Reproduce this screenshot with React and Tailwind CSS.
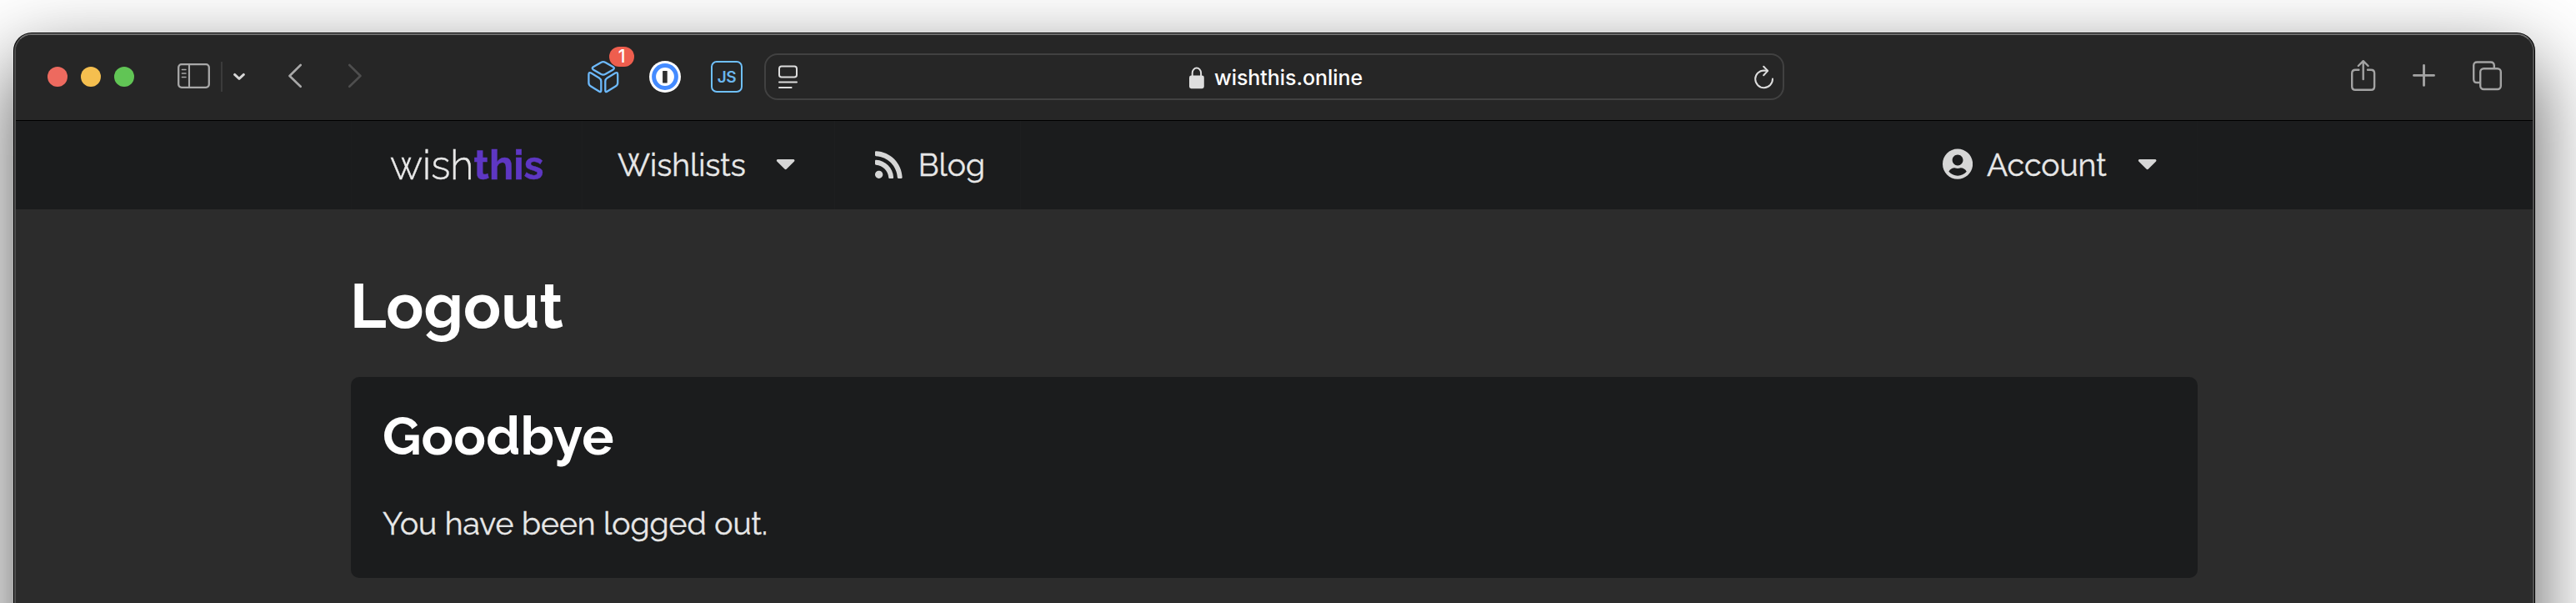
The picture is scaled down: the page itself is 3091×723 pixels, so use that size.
import { FaCaretDown, FaRss, FaUserCircle } from "react-icons/fa";

function SidebarIcon() {
  return (
    <svg className="ml-[52px] h-14 w-[39px] shrink-0" viewBox="0 0 39 56" fill="none" stroke="#a8a8a8">
      <rect x="1.2" y="13.2" width="36.6" height="27.6" rx="3.6" strokeWidth="2.3" />
      <path d="M14 13v28" strokeWidth="2.1" />
      <path d="M5.4 19.4h4.6M5.4 24h4.6M5.4 28.4h4.6" strokeWidth="1.5" strokeLinecap="round" />
    </svg>
  );
}

function CubeExtension() {
  return (
    <div className="relative ml-[271px] h-14 w-[38px] shrink-0">
      <svg className="h-14 w-[38px]" viewBox="0 0 38 56" fill="none" stroke="#6db9fb" strokeWidth="2.3" strokeLinejoin="round">
        <path d="M16 10.9Q18.8 9.4 21.6 10.9L30.8 16.2Q33 17.8 30.8 19.4L21.6 24.8Q18.8 26.3 16 24.8L6.8 19.4Q4.6 17.8 6.8 16.2Z" />
        <path d="M1.4 25.4Q1.4 22 4.2 23.6L14 29.4Q16.3 30.8 16.3 33.6V44.6Q16.3 47 14.2 45.7L4 39.5Q1.4 38 1.4 35.2Z" />
        <path d="M36.2 25.4Q36.2 22 33.4 23.6L23.6 29.4Q21.3 30.8 21.3 33.6V44.6Q21.3 47 23.4 45.7L33.6 39.5Q36.2 38 36.2 35.2Z" />
      </svg>
      <span className="absolute top-[-8px] left-[26px] flex h-6 w-[30px] items-center justify-center rounded-full bg-[#ee5e4e] font-['Inter',sans-serif] text-[21px] leading-6 font-medium text-white">
        1
      </span>
    </div>
  );
}

function PasswordExtension() {
  return (
    <svg className="ml-9 h-14 w-[38px] shrink-0" viewBox="0 0 38 56">
      <circle cx="19" cy="28" r="19" fill="#fff" />
      <circle cx="19" cy="28" r="13.4" fill="none" stroke="#448bff" strokeWidth="5" />
      <rect x="16.1" y="21" width="5.6" height="14.6" rx="0.6" fill="#2f2f2f" />
    </svg>
  );
}

function AddressBar() {
  return (
    <div className="ml-[26px] flex h-14 w-[1224px] shrink-0 items-center rounded-[16px] border-2 border-[#414141]">
      <svg className="ml-[15px] h-14 w-6 shrink-0" viewBox="0 0 24 56" fill="none" stroke="#dcdcdc" strokeWidth="2" strokeLinecap="round">
        <rect x="1" y="15.6" width="21" height="13" rx="2.8" />
        <path d="M1 34.4h21M1 41h14.6" />
      </svg>
      <svg className="ml-[469px] h-14 w-[18px] shrink-0" viewBox="0 0 18 56">
        <rect x="0" y="26.6" width="17.8" height="15.6" rx="2.4" fill="#dedede" />
        <path d="M3.7 28v-4.6a5.2 5.8 0 0 1 10.4 0V28" fill="none" stroke="#dedede" strokeWidth="2" />
      </svg>
      <span className="ml-[12px] pt-[2px] font-['Inter',sans-serif] text-[25px] leading-[30px] font-medium tracking-[-0.06px] whitespace-nowrap text-white">
        wishthis.online
      </span>
      <svg className="mr-[10px] ml-auto h-14 w-[25px] shrink-0" viewBox="0 0 25 56" fill="none" stroke="#dcdcdc" strokeWidth="2" strokeLinecap="round" strokeLinejoin="round">
        <path d="M23 30.6A10.4 10.4 0 1 1 12.6 20.4L17 20.8" />
        <path d="M12.2 15.8l5 5.1-5 5.3" />
      </svg>
    </div>
  );
}

function Toolbar() {
  return (
    <div className="flex h-[103px] items-start border-b border-black bg-[#262626] pt-[22px] pl-[38px]">
      <div className="flex h-14 items-center gap-4">
        <span className="size-6 rounded-full bg-[#ed6a5f]" />
        <span className="size-6 rounded-full bg-[#f5bf4f]" />
        <span className="size-6 rounded-full bg-[#61c555]" />
      </div>
      <SidebarIcon />
      <span className="mt-[10px] ml-[13px] h-9 w-0.5 bg-[#3b3b3b]" />
      <svg className="ml-[13px] h-14 w-[14px] shrink-0" viewBox="0 0 14 56" fill="none" stroke="#d6d6d6" strokeWidth="2.9" strokeLinecap="round" strokeLinejoin="round">
        <path d="M1.6 25.4L7 30.4l5.4-5" />
      </svg>
      <svg className="ml-[52px] h-14 w-4 shrink-0" viewBox="0 0 16 56" fill="none" stroke="#a8a8a8" strokeWidth="2.6" strokeLinecap="round" strokeLinejoin="round">
        <path d="M14.7 14L1.5 27l13.2 12.8" />
      </svg>
      <svg className="ml-14 h-14 w-4 shrink-0" viewBox="0 0 16 56" fill="none" stroke="#4e4e4e" strokeWidth="2.6" strokeLinecap="round" strokeLinejoin="round">
        <path d="M1.3 14l13.2 13L1.3 39.8" />
      </svg>
      <CubeExtension />
      <PasswordExtension />
      <div className="mt-[9px] ml-9 flex size-[38px] shrink-0 items-center justify-center rounded-[7px] border-2 border-[#6fc0fb] font-['Inter',sans-serif] text-[19px] leading-none font-semibold tracking-[-0.5px] text-[#6ab6ee]">
        JS
      </div>
      <AddressBar />
      <svg className="ml-[680px] h-14 w-[30px] shrink-0" viewBox="0 0 30 56" fill="none" stroke="#a3a3a3" strokeWidth="2.4" strokeLinecap="round" strokeLinejoin="round">
        <path d="M9.4 19.7H5.4Q1.2 19.7 1.2 23.7V39.8Q1.2 43.8 5.4 43.8H24Q28.1 43.8 28.1 39.8V23.7Q28.1 19.7 24 19.7H20" />
        <path d="M14.7 31V9.6M8.8 15l5.9-5.8 5.9 5.8" />
      </svg>
      <svg className="ml-11 h-14 w-7 shrink-0" viewBox="0 0 28 56" fill="none" stroke="#a3a3a3" strokeWidth="2.9" strokeLinecap="round">
        <path d="M1.5 26.4h24M13.5 14.4v24" />
      </svg>
      <svg className="ml-11 h-14 w-9 shrink-0" viewBox="0 0 36 56" fill="none" stroke="#a3a3a3" strokeWidth="2.4">
        <path d="M25.8 17.5V14.6Q25.8 10.5 21.7 10.5H5.3Q1.2 10.5 1.2 14.6V30.9Q1.2 35 5.3 35H9" />
        <rect x="9.2" y="18.2" width="24.6" height="24.8" rx="4" />
      </svg>
    </div>
  );
}

function Navigation() {
  return (
    <nav className="h-[106px] bg-[#1b1c1d]">
      <div className="mx-auto flex h-full w-[2216px] items-stretch border-x border-[#1d1e1f] text-[37.33px] leading-none whitespace-nowrap text-[#e8e8e8] [-webkit-text-stroke:0.4px]">
        <div className="flex w-[277px] items-center border-r border-[#1d1e1f] pl-[46px] text-[48.5px]">
          <span className="font-light">wish</span>
          <span className="font-bold text-[#5e37c3]">this</span>
        </div>
        <div className="flex w-[303px] items-center border-r border-[#1d1e1f] pl-[42px]">
          <span className="pt-[2px]">Wishlists</span>
          <FaCaretDown className="mb-[5px] ml-[36px] h-[37.33px] w-[23.33px] text-[#d6d6d6]" />
        </div>
        <div className="flex w-[223px] items-center border-r border-[#1d1e1f] pl-12">
          <FaRss className="h-[37.33px] w-[32.67px] text-[#d6d6d6]" />
          <span className="ml-[19px] pt-[2px]">Blog</span>
        </div>
        <div className="ml-auto flex items-center pr-[48px]">
          <FaUserCircle className="mb-[2px] h-[37.33px] w-[36.17px] text-[#d6d6d6]" />
          <span className="ml-[17px] pt-[2px]">Account</span>
          <FaCaretDown className="mb-[5px] ml-[37px] h-[37.33px] w-[23.33px] text-[#d6d6d6]" />
        </div>
      </div>
    </nav>
  );
}

export default function App() {
  return (
    <div className="h-[723px] w-[3091px] overflow-hidden bg-white pt-[39px] pl-4 font-['Raleway','Lato',sans-serif]">
      <div className="h-[1200px] w-[3026px] rounded-[22px] bg-black p-px shadow-[0_36px_96px_rgba(0,0,0,0.66)]">
        <div className="h-full overflow-hidden rounded-[21px] border-2 border-[#505050] border-t-[#6f6f6f] bg-[#2c2c2c]">
          <Toolbar />
          <Navigation />
          <main className="mx-auto w-[2216px] pt-[72px]">
            <h1 className="-ml-px text-[74.67px] leading-[88px] font-bold text-white">Logout</h1>
            <section className="mt-[41px] h-[241px] rounded-[10px] bg-[#1b1c1d] px-[38px] pt-[33px]">
              <h2 className="text-[64px] leading-[76px] font-bold tracking-[0.08px] text-white">Goodbye</h2>
              <p className="mt-[40px] text-[37.33px] leading-[54px] text-[#e8e8e8] [-webkit-text-stroke:0.4px]">You have been logged out.</p>
            </section>
          </main>
        </div>
      </div>
    </div>
  );
}
